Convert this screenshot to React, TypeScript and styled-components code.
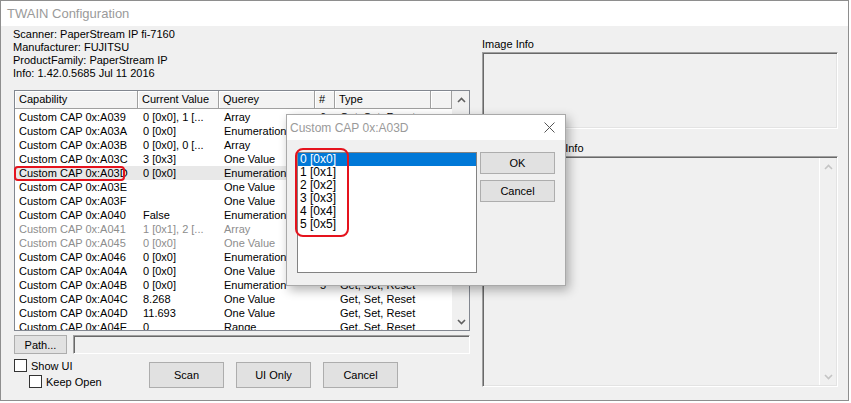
import React from 'react';
import styled, { createGlobalStyle } from 'styled-components';

const GlobalStyle = createGlobalStyle`
  html, body {
    margin: 0;
    padding: 0;
    background: #fff;
  }
  body {
    font-family: "Liberation Sans", Arial, sans-serif;
    font-size: 11px;
    color: #000;
  }
  * {
    box-sizing: border-box;
  }
`;

const Window = styled.div`
  position: relative;
  width: 849px;
  height: 401px;
  border: 1px solid #8e8e8e;
  background: #f0f0f0;
  display: flex;
  flex-direction: column;
`;

const TitleBar = styled.div`
  height: 25px;
  flex: none;
  background: #fff;
  display: flex;
  align-items: center;
  padding-left: 6px;
  font-size: 13px;
  color: #9a9a9a;
`;

const Body = styled.div`
  display: grid;
  grid-template-columns: 456px 356px;
  column-gap: 12px;
  padding-left: 13px;
`;

const LeftCol = styled.div`
  display: flex;
  flex-direction: column;
`;

const InfoBlock = styled.div`
  margin: 2px 0 0 -1px;
  line-height: 13px;
`;

const ListBox = styled.div`
  position: relative;
  height: 241px;
  margin-top: 10px;
  border: 1px solid #828790;
  background: #fff;
  display: flex;
`;

const ListMain = styled.div`
  flex: 1;
  overflow: hidden;
`;

const COLS = '123px 81px 96px 20px 96px 21px';

const HeaderRow = styled.div`
  display: grid;
  grid-template-columns: ${COLS};
  height: 18px;
  background: #f3f3f3;
  border-bottom: 1px solid #a0a0a0;
`;

const HeaderCell = styled.div`
  border-right: 1px solid #a0a0a0;
  box-shadow: inset 1px 1px #fff;
  padding-left: 4px;
  line-height: 16px;
  white-space: nowrap;
  overflow: hidden;
`;

const Rows = styled.div`
  margin-top: 1px;
`;

const Row = styled.div<{ $hover?: boolean; $disabled?: boolean }>`
  display: grid;
  grid-template-columns: ${COLS};
  height: 14px;
  line-height: 14px;
  background: ${p => (p.$hover ? '#e8e8e8' : 'transparent')};
  color: ${p => (p.$disabled ? '#8d8d8d' : '#000')};
`;

const Cell = styled.div<{ $first?: boolean }>`
  padding-left: ${p => (p.$first ? '4px' : '5px')};
  white-space: nowrap;
  overflow: hidden;
`;

const ScrollBar = styled.div<{ $disabled?: boolean }>`
  width: 17px;
  flex: none;
  background: #f0f0f0;
  display: flex;
  flex-direction: column;
  justify-content: space-between;
  border-left: 1px solid ${p => (p.$disabled ? '#fff' : '#f0f0f0')};
`;

const ArrowBox = styled.div`
  height: 17px;
  display: flex;
  align-items: center;
  justify-content: center;
`;

const RedMark = styled.div<{ $radius: number }>`
  position: absolute;
  border: 2px solid #e5131d;
  border-radius: ${p => p.$radius}px;
  pointer-events: none;
`;

const PathRow = styled.div`
  display: flex;
  gap: 6px;
  margin-top: 4px;
  height: 19px;
`;

const Button = styled.button<{ $w: number; $h: number }>`
  width: ${p => p.$w}px;
  height: ${p => p.$h}px;
  flex: none;
  padding: 0;
  background: #e1e1e1;
  border: 1px solid #adadad;
  font-family: "Liberation Sans", Arial, sans-serif;
  font-size: 11px;
  color: #000;
`;

const PathField = styled.div`
  flex: 1;
  border: 1px solid;
  border-color: #a0a0a0 #fff #fff #a0a0a0;
  box-shadow: inset 1px 1px #696969;
  background: #f0f0f0;
`;

const BottomRow = styled.div`
  display: flex;
  margin-top: 5px;
`;

const CheckCol = styled.div`
  width: 135px;
  display: flex;
  flex-direction: column;
  gap: 3px;
`;

const CheckRow = styled.label<{ $indent?: number }>`
  display: flex;
  align-items: center;
  gap: 4px;
  height: 13px;
  margin-left: ${p => p.$indent || 0}px;
`;

const CheckBox = styled.span`
  width: 13px;
  height: 13px;
  background: #fff;
  border: 1px solid #333;
`;

const ButtonRow = styled.div`
  display: flex;
  gap: 12px;
  margin-top: 3px;
`;

const RightCol = styled.div`
  display: flex;
  flex-direction: column;
`;

const GroupLabel = styled.div<{ $top: number }>`
  margin-top: ${p => p.$top}px;
  line-height: 14px;
  height: 14px;
  margin-bottom: 1px;
`;

const SunkenBox = styled.div<{ $h: number }>`
  height: ${p => p.$h}px;
  border: 1px solid;
  border-color: #a0a0a0 #fff #fff #a0a0a0;
  box-shadow: inset 1px 1px #696969, inset -1px -1px #e3e3e3;
  background: #f0f0f0;
  display: flex;
  justify-content: flex-end;
  padding: 1px 1px 1px 2px;
`;

const Dialog = styled.div`
  position: absolute;
  left: 285px;
  top: 113px;
  width: 280px;
  height: 172px;
  border: 1px solid #a9a9a9;
  background: #f0f0f0;
  box-shadow: 3px 4px 10px rgba(0, 0, 0, 0.3);
  display: flex;
  flex-direction: column;
`;

const DialogTitle = styled.div`
  height: 25px;
  background: #fff;
  display: flex;
  align-items: center;
  justify-content: space-between;
  padding: 0 10px 0 3px;
  font-size: 12px;
  color: #9a9a9a;
`;

const DialogBody = styled.div`
  display: flex;
  gap: 3px;
  padding: 12px 10px 0 10px;
`;

const OptionList = styled.div`
  width: 180px;
  height: 121px;
  border: 1px solid #828282;
  background: #fff;
  font-size: 12px;
`;

const Option = styled.div<{ $selected?: boolean }>`
  height: 13px;
  line-height: 13px;
  padding-left: 2px;
  background: ${p => (p.$selected ? '#0078d7' : 'transparent')};
  color: ${p => (p.$selected ? '#fff' : '#000')};
`;

const DialogButtons = styled.div`
  display: flex;
  flex-direction: column;
  gap: 6px;
`;

type Cap = {
  id: string;
  value: string;
  query: string;
  count: string;
  type: string;
  disabled?: boolean;
};

// rows under the dialog keep their Type/# cells empty, only the visible ones are filled
const caps: Cap[] = [
  { id: 'A039', value: '0 [0x0], 1 [...', query: 'Array', count: '6', type: 'Get, Set, Reset' },
  { id: 'A03A', value: '0 [0x0]', query: 'Enumeration', count: '', type: '' },
  { id: 'A03B', value: '0 [0x0], 0 [...', query: 'Array', count: '', type: '' },
  { id: 'A03C', value: '3 [0x3]', query: 'One Value', count: '', type: '' },
  { id: 'A03D', value: '0 [0x0]', query: 'Enumeration', count: '', type: '' },
  { id: 'A03E', value: '', query: 'One Value', count: '', type: '' },
  { id: 'A03F', value: '', query: 'One Value', count: '', type: '' },
  { id: 'A040', value: 'False', query: 'Enumeration', count: '', type: '' },
  { id: 'A041', value: '1 [0x1], 2 [...', query: 'Array', count: '', type: '', disabled: true },
  { id: 'A045', value: '0 [0x0]', query: 'One Value', count: '', type: '', disabled: true },
  { id: 'A046', value: '0 [0x0]', query: 'Enumeration', count: '', type: '' },
  { id: 'A04A', value: '0 [0x0]', query: 'One Value', count: '', type: '' },
  { id: 'A04B', value: '0 [0x0]', query: 'Enumeration', count: '5', type: 'Get, Set, Reset' },
  { id: 'A04C', value: '8.268', query: 'One Value', count: '', type: 'Get, Set, Reset' },
  { id: 'A04D', value: '11.693', query: 'One Value', count: '', type: 'Get, Set, Reset' },
  { id: 'A04E', value: '0', query: 'Range', count: '', type: 'Get, Set, Reset' },
];

const options = ['0 [0x0]', '1 [0x1]', '2 [0x2]', '3 [0x3]', '4 [0x4]', '5 [0x5]'];

const Chevron: React.FC<{ down?: boolean; color: string }> = ({ down, color }) => (
  <svg width="9" height="6" viewBox="0 0 9 6">
    <polyline
      points={down ? '1,1 4.5,4.5 8,1' : '1,5 4.5,1.5 8,5'}
      fill="none"
      stroke={color}
      strokeWidth="1.6"
    />
  </svg>
);

const App: React.FC = () => {
  return (
    <>
      <GlobalStyle />
      <Window>
        <TitleBar>TWAIN Configuration</TitleBar>
        <Body>
          <LeftCol>
            <InfoBlock>
              <div>Scanner: PaperStream IP fi-7160</div>
              <div>Manufacturer: FUJITSU</div>
              <div>ProductFamily: PaperStream IP</div>
              <div>Info: 1.42.0.5685 Jul 11 2016</div>
            </InfoBlock>
            <ListBox>
              <ListMain>
                <HeaderRow>
                  <HeaderCell>Capability</HeaderCell>
                  <HeaderCell>Current Value</HeaderCell>
                  <HeaderCell>Querey</HeaderCell>
                  <HeaderCell>#</HeaderCell>
                  <HeaderCell>Type</HeaderCell>
                  <HeaderCell />
                </HeaderRow>
                <Rows>
                  {caps.map(c => (
                    <Row key={c.id} $hover={c.id === 'A03D'} $disabled={c.disabled}>
                      <Cell $first>Custom CAP 0x:{c.id}</Cell>
                      <Cell>{c.value}</Cell>
                      <Cell>{c.query}</Cell>
                      <Cell>{c.count}</Cell>
                      <Cell>{c.type}</Cell>
                      <Cell />
                    </Row>
                  ))}
                </Rows>
              </ListMain>
              <ScrollBar>
                <ArrowBox>
                  <Chevron color="#606060" />
                </ArrowBox>
                <ArrowBox>
                  <Chevron down color="#606060" />
                </ArrowBox>
              </ScrollBar>
              <RedMark $radius={4} style={{ left: -1, top: 75, width: 111, height: 15 }} />
            </ListBox>
            <PathRow>
              <Button $w={53} $h={19}>Path...</Button>
              <PathField />
            </PathRow>
            <BottomRow>
              <CheckCol>
                <CheckRow>
                  <CheckBox />
                  Show UI
                </CheckRow>
                <CheckRow $indent={15}>
                  <CheckBox />
                  Keep Open
                </CheckRow>
              </CheckCol>
              <ButtonRow>
                <Button $w={75} $h={26}>Scan</Button>
                <Button $w={75} $h={26}>UI Only</Button>
                <Button $w={75} $h={26}>Cancel</Button>
              </ButtonRow>
            </BottomRow>
          </LeftCol>
          <RightCol>
            <GroupLabel $top={11}>Image Info</GroupLabel>
            <SunkenBox $h={77} />
            <GroupLabel $top={12}>Extended Image Info</GroupLabel>
            <SunkenBox $h={231}>
              <ScrollBar $disabled>
                <ArrowBox>
                  <Chevron color="#c4c4c4" />
                </ArrowBox>
                <ArrowBox>
                  <Chevron down color="#c4c4c4" />
                </ArrowBox>
              </ScrollBar>
            </SunkenBox>
          </RightCol>
        </Body>

        <Dialog>
          <DialogTitle>
            <span>Custom CAP 0x:A03D</span>
            <svg width="11" height="11" viewBox="0 0 11 11">
              <path d="M0.5 0.5 L10.5 10.5 M10.5 0.5 L0.5 10.5" stroke="#555" strokeWidth="1" />
            </svg>
          </DialogTitle>
          <DialogBody>
            <OptionList>
              {options.map((o, i) => (
                <Option key={o} $selected={i === 0}>
                  {o}
                </Option>
              ))}
            </OptionList>
            <DialogButtons>
              <Button $w={75} $h={22}>OK</Button>
              <Button $w={75} $h={22}>Cancel</Button>
            </DialogButtons>
          </DialogBody>
          <RedMark $radius={8} style={{ left: 8, top: 33, width: 54, height: 89 }} />
        </Dialog>
      </Window>
    </>
  );
};

export default App;
